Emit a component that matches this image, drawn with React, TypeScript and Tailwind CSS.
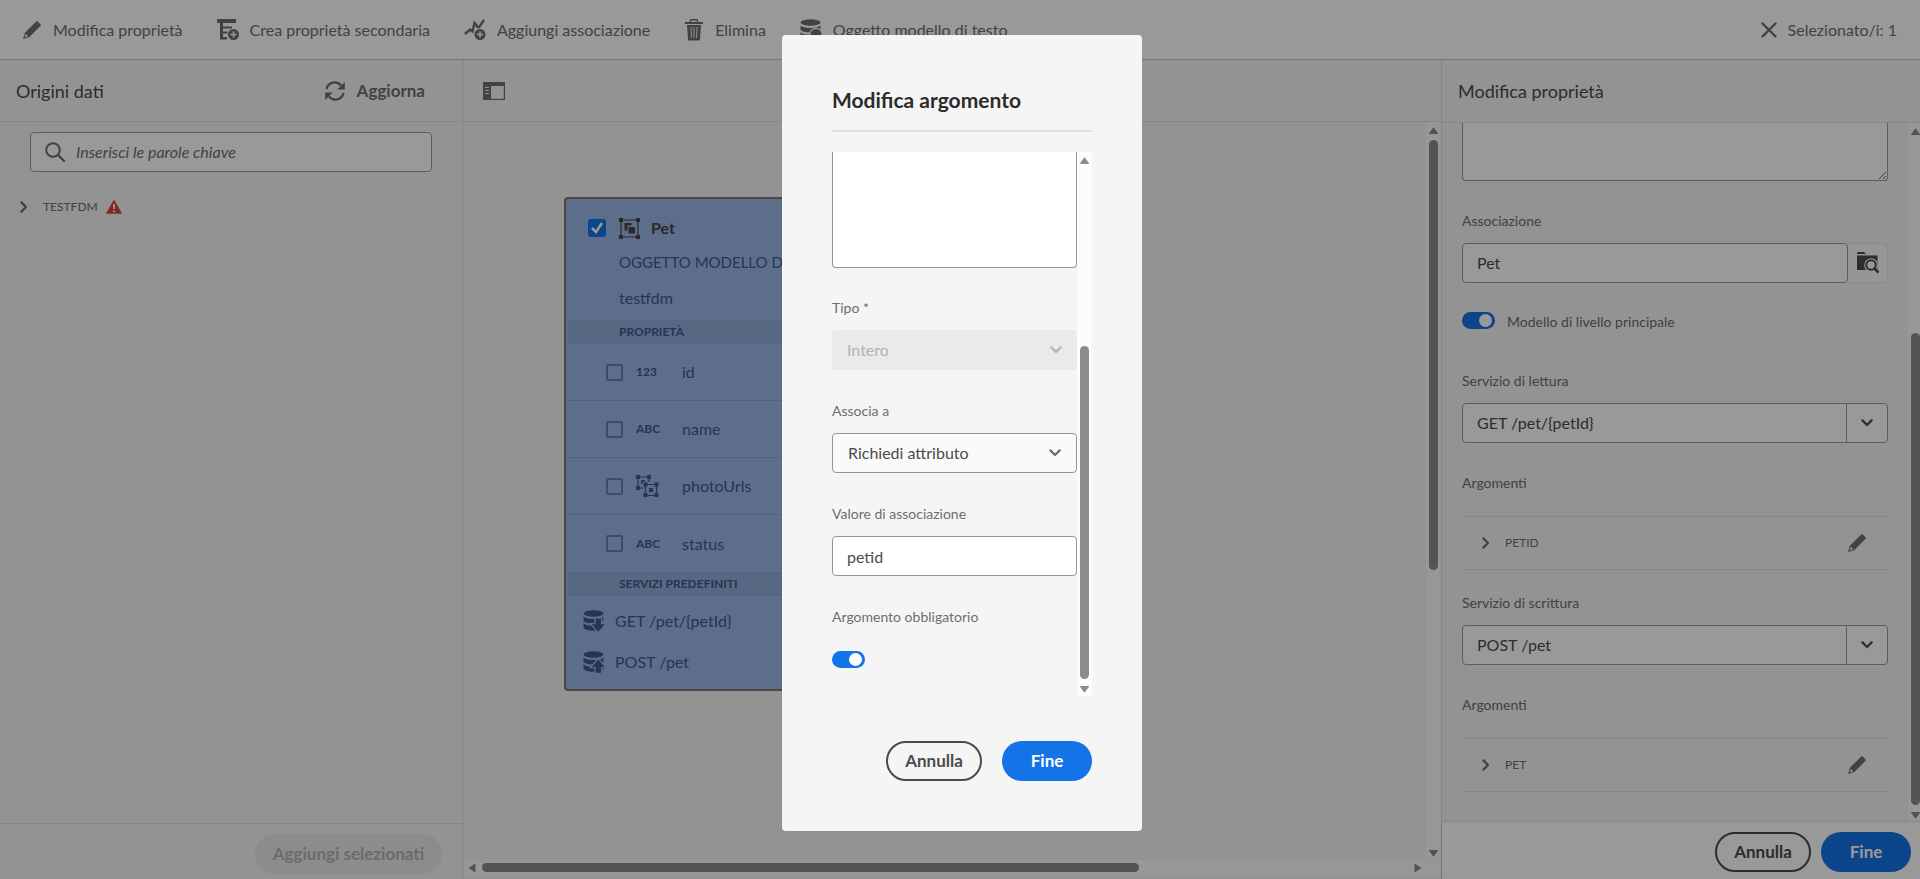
import type { ReactNode } from "react";

type IconProps = { className?: string };

function Pencil({ className = "size-5" }: IconProps) {
  return (
    <svg viewBox="0 0 36 36" fill="currentColor" className={className} aria-hidden="true">
      <path d="M33.567 8.2L27.8 2.432a1.215 1.215 0 0 0-.866-.353h-.06a1.372 1.372 0 0 0-.932.387L5.274 23.136a.992.992 0 0 0-.251.422L2.055 33.1c-.114.377.459.851.783.851a.251.251 0 0 0 .062-.007c.276-.063 7.866-2.344 9.542-2.847a.97.97 0 0 0 .414-.249l20.677-20.684A1.372 1.372 0 0 0 33.92 9.126 1.221 1.221 0 0 0 33.567 8.2zM11.4 29.316c-2.161.649-4.862 1.464-6.729 2.022l2.009-6.73z" />
    </svg>
  );
}

function AddChild() {
  return (
    <svg viewBox="0 0 22 22" fill="currentColor" className="size-[22px]" aria-hidden="true">
      <path d="M0 0h19v4H0z" />
      <path d="M3 4h3v16.500H3zM5 7.500h10v2H5zM5 12.500h5.500v2H5zM5 18h5v2.500H5z" />
      <circle cx="16.500" cy="15.500" r="5.500" />
      <path d="M15.700 12.500h1.600v2.200h2.200v1.600h-2.200v2.200h-1.600v-2.200h-2.200v-1.600h2.200z" fill="#fff" />
    </svg>
  );
}

function AddAssociation() {
  return (
    <svg viewBox="0 0 22 22" className="size-[22px]" aria-hidden="true">
      <path d="M1 15l5-4.500 2.500 2L10.500 4l4 5 5.500-8" fill="none" stroke="currentColor" strokeWidth="2.400" />
      <circle cx="16" cy="15.500" r="6.500" fill="#fff" />
      <circle cx="16" cy="15.500" r="5.500" fill="currentColor" />
      <path d="M15.200 12.500h1.600v2.200H19v1.600h-2.200v2.200h-1.600v-2.200H13v-1.600h2.200z" fill="#fff" />
    </svg>
  );
}

function Trash() {
  return (
    <svg viewBox="0 0 20 22" className="h-[22px] w-5" aria-hidden="true">
      <path d="M6.500 3V1.500q0-.7.7-.7h5.600q.7 0 .7.700V3" fill="none" stroke="currentColor" strokeWidth="1.400" />
      <path d="M1 3h18v2H1zM3 6h14l-1 14.500q-.1 1-1 1H5q-.9 0-1-1z" fill="currentColor" />
      <path d="M7 8l.5 11M10 8v11M13 8l-.5 11" stroke="#fff" strokeWidth="0.900" />
    </svg>
  );
}

function Database({ mode, gap }: { mode: "down" | "up" | "add"; gap: string }) {
  return (
    <svg viewBox="0 0 22 22" className="size-[22px]" aria-hidden="true">
      <ellipse cx="10.500" cy="3.500" rx="10" ry="3.300" fill="currentColor" />
      <path
        d="M.5 6.500q2 2.400 10 2.400t10-2.400v4.300q-2 2.600-10 2.600T.5 10.800zM.5 13.200q2 2.500 10 2.500t10-2.500v4.600q-2 3-10 3t-10-3z"
        fill="currentColor"
      />
      {mode === "down" && (
        <path d="M12.500 8.500h5.500v5.800h3.700L15.200 21.700 8.800 14.300h3.700z" fill="currentColor" stroke={gap} strokeWidth="2.600" paintOrder="stroke" />
      )}
      {mode === "up" && (
        <path d="M12.500 21.700h5.500v-5.800h3.700L15.200 8.500 8.800 15.900h3.700z" fill="currentColor" stroke={gap} strokeWidth="2.600" paintOrder="stroke" />
      )}
      {mode === "add" && <circle cx="16" cy="15.500" r="5.500" fill="currentColor" stroke={gap} strokeWidth="2.600" paintOrder="stroke" />}
    </svg>
  );
}

function Cross() {
  return (
    <svg viewBox="0 0 16 16" className="size-4" aria-hidden="true">
      <path d="M1.500 1.500l13 13M14.500 1.500l-13 13" stroke="currentColor" strokeWidth="2.400" strokeLinecap="round" />
    </svg>
  );
}

function Refresh() {
  return (
    <svg viewBox="0 0 20 20" className="size-5" aria-hidden="true">
      <path d="M1.500 8A8.300 8.300 0 0 1 16 4.500M18.500 12A8.300 8.300 0 0 1 4 15.500" fill="none" stroke="currentColor" strokeWidth="2.300" />
      <path d="M19.800 1v7.500h-7.500zM.2 19v-7.500h7.500z" fill="currentColor" />
    </svg>
  );
}

function PanelIcon() {
  return (
    <svg viewBox="0 0 22 18" className="h-[18px] w-[22px]" aria-hidden="true">
      <path d="M0 0h22v18H0z" fill="currentColor" />
      <path d="M8 4h12.800v12.800H8z" fill="#f5f5f5" />
      <path d="M2 5.500h4M2 8.500h4M2 11.500h4" stroke="#f5f5f5" strokeWidth="1.200" />
    </svg>
  );
}

function SearchIcon() {
  return (
    <svg viewBox="0 0 20 20" className="size-5 shrink-0" aria-hidden="true">
      <circle cx="8" cy="8" r="6.800" fill="none" stroke="currentColor" strokeWidth="2" />
      <path d="M13 13l6 6" stroke="currentColor" strokeWidth="2.400" strokeLinecap="round" />
    </svg>
  );
}

function ChevronRight() {
  return (
    <svg viewBox="0 0 8 12" className="h-3 w-2 shrink-0" aria-hidden="true">
      <path d="M1.400 1.400L6 6l-4.600 4.600" fill="none" stroke="currentColor" strokeWidth="2.200" strokeLinecap="round" strokeLinejoin="round" />
    </svg>
  );
}

function ChevronDown() {
  return (
    <svg viewBox="0 0 12 8" className="h-2 w-3 shrink-0" aria-hidden="true">
      <path d="M1.400 1.400L6 6l4.600-4.600" fill="none" stroke="currentColor" strokeWidth="2.200" strokeLinecap="round" strokeLinejoin="round" />
    </svg>
  );
}

function Warning() {
  return (
    <svg viewBox="0 0 16 14" className="h-[14px] w-4" aria-label="Avviso" role="img">
      <path d="M7.400.5q.6-.9 1.200 0l7 12.300q.4 1-.6 1H1q-1 0-.6-1z" fill="#e0403a" />
      <path d="M8 4v5M8 10.500v1.800" stroke="#fff" strokeWidth="1.800" />
    </svg>
  );
}

function FolderSearch() {
  return (
    <svg viewBox="0 0 22 22" className="size-[22px]" aria-hidden="true">
      <path d="M0 1q0-1 1-1h6l2 2H0zM0 3.500h20.500V18H0z" fill="currentColor" />
      <circle cx="14" cy="13" r="6.800" fill="#fafafa" />
      <path d="M17 16l5 5" stroke="#fafafa" strokeWidth="4" />
      <circle cx="14" cy="13" r="4.700" fill="none" stroke="currentColor" strokeWidth="2" />
      <path d="M17.500 16.500l4 4" stroke="currentColor" strokeWidth="2.600" />
    </svg>
  );
}

function ObjectIcon() {
  return (
    <svg viewBox="0 0 21 21" className="size-[21px]" fill="currentColor" aria-hidden="true">
      <path d="M2 2h17v17H2z" fill="none" stroke="currentColor" strokeWidth="1.200" />
      <path d="M0 0h4v4H0zM17 0h4v4h-4zM0 17h4v4H0zM17 17h4v4h-4zM5.500 5h7v2.500h-4v5h-3zM9.500 9h6.500v6.500H9.500z" />
    </svg>
  );
}

function ObjectsIcon() {
  return (
    <svg viewBox="0 0 23 22" className="h-[22px] w-[23px]" fill="currentColor" aria-hidden="true">
      <path d="M8 13H2V2h11v5M9.500 9.500h11v11h-11z" fill="none" stroke="currentColor" strokeWidth="1.200" />
      <path d="M0 0h4v4H0zM11 0h4v4h-4zM0 11h4v4H0zM7.500 7.500h4v4h-4zM18.500 7.500h4v4h-4zM7.500 18h4v4h-4zM18.500 18h4v4h-4zM13 13h4v4h-4zM5 5h4v1.500H6.500V9H5z" />
    </svg>
  );
}

function Arrow({ dir }: { dir: "up" | "down" | "left" | "right" }) {
  const d = {
    up: "M4.500.8L8.600 6.500H.4z",
    down: "M4.500 7.200L8.600 1.500H.4z",
    left: "M1.200 4L7 .2v7.600z",
    right: "M7.800 4L2 .2v7.600z",
  }[dir];
  return (
    <svg viewBox="0 0 9 8" className="h-2 w-[9px] shrink-0 text-[#8b8b8b]" aria-hidden="true">
      <path d={d} fill="currentColor" stroke="currentColor" strokeLinejoin="round" />
    </svg>
  );
}

function VerticalBar({ before, thumb, after, clip = false }: { before: string; thumb: string; after: string; clip?: boolean }) {
  return (
    <div
      aria-hidden="true"
      className={`flex shrink-0 flex-col items-center bg-[#fcfcfc] pt-[5px] pb-[3px] ${clip ? "w-3 pl-[3px]" : "w-[15px]"}`}
    >
      <Arrow dir="up" />
      <div className={before} />
      <div className={`w-[9px] rounded-full bg-[#8b8b8b] ${thumb}`} />
      <div className={after} />
      <Arrow dir="down" />
    </div>
  );
}

function Toggle({ id, label }: { id: string; label?: string }) {
  return (
    <input
      id={id}
      type="checkbox"
      role="switch"
      defaultChecked
      aria-label={label}
      className="h-[17px] w-[33px] shrink-0 appearance-none rounded-full bg-[#1473e6] before:mt-[2px] before:ml-[17px] before:block before:size-[13px] before:rounded-full before:bg-white"
    />
  );
}

function ToolButton({ icon, children }: { icon: ReactNode; children: ReactNode }) {
  return (
    <button type="button" className="flex items-center gap-[11px] whitespace-nowrap">
      {icon}
      <span>{children}</span>
    </button>
  );
}

function CancelButton() {
  return (
    <button type="button" className="h-10 w-24 rounded-full border-2 border-[#4b4b4b] text-[17px] leading-6 font-bold text-[#4b4b4b]">
      Annulla
    </button>
  );
}

function DoneButton() {
  return (
    <button type="button" className="h-10 w-[90px] rounded-full bg-[#1473e6] text-[17px] leading-6 font-bold text-white">
      Fine
    </button>
  );
}

function Field({ id, label, children }: { id: string; label: string; children: ReactNode }) {
  return (
    <div className="flex flex-col">
      <label htmlFor={id} className="mb-3 text-sm leading-5 text-[#6e6e6e]">
        {label}
      </label>
      {children}
    </div>
  );
}

function ServiceField({ id, label, value }: { id: string; label: string; value: string }) {
  return (
    <Field id={id} label={label}>
      <div className="flex h-10 rounded border border-[#9b9b9b] bg-white text-[#4b4b4b]">
        <input id={id} defaultValue={value} className="min-w-0 flex-1 px-[14px] text-base" />
        <button type="button" aria-label={label} className="flex w-[41px] items-center justify-center border-l border-[#9b9b9b]">
          <ChevronDown />
        </button>
      </div>
    </Field>
  );
}

function Arguments({ name }: { name: string }) {
  return (
    <section>
      <h3 className="text-sm leading-5 text-[#6e6e6e]">Argomenti</h3>
      <div className="mt-[23px] flex h-[54px] items-center border-y border-[#e1e1e1] pr-[21px] pl-5 text-[#6e6e6e]">
        <button type="button" className="flex flex-1 items-center gap-[15px] text-xs">
          <ChevronRight />
          {name}
        </button>
        <button type="button" aria-label="Modifica" className="text-[#6e6e6e]">
          <Pencil />
        </button>
      </div>
    </section>
  );
}

const properties = [
  { name: "id", kind: "123" },
  { name: "name", kind: "ABC" },
  { name: "photoUrls", kind: "" },
  { name: "status", kind: "ABC" },
];

function ModelCard() {
  return (
    <article className="mt-[75px] ml-[100px] w-[440px] shrink-0 rounded border-2 border-[#7d7b79] bg-[#9bb7e8] text-base text-[#40598a]">
      <header className="flex h-[121px] flex-col px-[22px] pt-[17px]">
        <div className="flex items-center text-[#4a4541]">
          <input
            id="pet"
            type="checkbox"
            defaultChecked
            className="size-[18px] appearance-none rounded-[3px] bg-[#1473e6] bg-[url('data:image/svg+xml,%3Csvg%20xmlns=%22http://www.w3.org/2000/svg%22%20viewBox=%220%200%2018%2018%22%3E%3Cpath%20d=%22M4%209l4%204%206-9%22%20fill=%22none%22%20stroke=%22white%22%20stroke-width=%222.500%22/%3E%3C/svg%3E')]"
          />
          <span className="ml-[13px]">
            <ObjectIcon />
          </span>
          <label htmlFor="pet" className="ml-[11px] font-bold">
            Pet
          </label>
        </div>
        <p className="mt-[10px] ml-[31px] text-[15px] leading-6">OGGETTO MODELLO DATI</p>
        <p className="mt-3 ml-[31px] leading-6">testfdm</p>
      </header>
      <h3 className="mx-[2px] flex h-6 items-center border-y border-[#8ba5d2] bg-[#93addb] pl-[51px] text-xs font-bold">PROPRIETÀ</h3>
      <ul className="mx-[2px]">
        {properties.map((p) => (
          <li key={p.name} className="flex h-[57px] items-center border-b border-[#8ba5d2] pl-[38px] last:border-b-0">
            <input
              id={`prop-${p.name}`}
              type="checkbox"
              className="size-[17px] appearance-none rounded-[2px] border-2 border-[#6780ab]"
            />
            <span className="ml-[13px] flex w-[46px] items-center text-xs font-bold">{p.kind || <ObjectsIcon />}</span>
            <label htmlFor={`prop-${p.name}`}>{p.name}</label>
          </li>
        ))}
      </ul>
      <h3 className="mx-[2px] flex h-6 items-center border-y border-[#8ba5d2] bg-[#93addb] pl-[51px] text-xs font-bold">SERVIZI PREDEFINITI</h3>
      <ul className="flex h-[93px] flex-col pt-1">
        <li className="flex h-[41px] items-center gap-[10px] pl-[17px]">
          <Database mode="down" gap="#9bb7e8" />
          GET /pet/&#123;petId&#125;
        </li>
        <li className="flex h-[41px] items-center gap-[10px] pl-[17px]">
          <Database mode="up" gap="#9bb7e8" />
          POST /pet
        </li>
      </ul>
    </article>
  );
}

function ArgumentDialog() {
  return (
    <div className="absolute inset-0 flex items-start justify-center bg-black/40 pt-[35px]">
      <div role="dialog" aria-modal="true" aria-labelledby="dialog-title" className="ml-1 flex w-[360px] flex-col rounded bg-[#f5f5f5] px-[50px] pt-[50px] pb-[50px]">
        <h2 id="dialog-title" className="border-b-2 border-[#e1e1e1] pb-[15px] text-[21px] leading-[30px] font-bold text-[#2c2c2c]">
          Modifica argomento
        </h2>
        <div className="mt-5 flex">
          <div className="flex min-w-0 flex-1 flex-col pb-7">
            <textarea
              aria-label="Descrizione"
              className="h-[116px] resize-none rounded-b border border-t-0 border-[#959595] bg-white p-3"
            />
            <div className="mt-[30px] flex flex-col gap-[31px]">
              <Field id="type" label="Tipo *">
                <div className="flex h-10 items-center rounded bg-[#eaeaea] text-[#b3b3b3]">
                  <select id="type" disabled className="h-full flex-1 appearance-none px-[15px] text-base opacity-100">
                    <option>Intero</option>
                  </select>
                  <span className="pr-[15px]">
                    <ChevronDown />
                  </span>
                </div>
              </Field>
              <Field id="bind" label="Associa a">
                <div className="flex h-10 items-center rounded border border-[#959595] bg-[#fafafa] text-[#4b4b4b]">
                  <select id="bind" className="h-full flex-1 appearance-none px-[15px] text-base">
                    <option>Richiedi attributo</option>
                  </select>
                  <span className="pr-[15px] text-[#6e6e6e]">
                    <ChevronDown />
                  </span>
                </div>
              </Field>
              <Field id="bind-value" label="Valore di associazione">
                <input
                  id="bind-value"
                  defaultValue="petid"
                  className="h-10 rounded border border-[#959595] bg-white px-[14px] text-base text-[#4b4b4b]"
                />
              </Field>
              <div className="flex flex-col items-start gap-6">
                <label htmlFor="required" className="text-sm leading-5 text-[#6e6e6e]">
                  Argomento obbligatorio
                </label>
                <Toggle id="required" />
              </div>
            </div>
          </div>
          <VerticalBar before="flex-1" thumb="h-[333px]" after="h-[6px]" />
        </div>
        <div className="mt-[45px] flex justify-end gap-5">
          <CancelButton />
          <DoneButton />
        </div>
      </div>
    </div>
  );
}

export default function App() {
  return (
    <div className="relative flex h-screen flex-col overflow-hidden bg-[#f5f5f5] font-['Lato',sans-serif] text-base text-[#4b4b4b]">
      <header className="flex h-[60px] shrink-0 items-center border-b border-[#c8c8c8] bg-white pt-px pr-[23px] pl-[22px] text-[#6e6e6e]">
        <nav className="flex flex-1 items-center gap-[34px]">
          <ToolButton icon={<Pencil />}>Modifica proprietà</ToolButton>
          <ToolButton icon={<AddChild />}>Crea proprietà secondaria</ToolButton>
          <ToolButton icon={<AddAssociation />}>Aggiungi associazione</ToolButton>
          <ToolButton icon={<Trash />}>Elimina</ToolButton>
          <ToolButton icon={<Database mode="add" gap="#ffffff" />}>Oggetto modello di testo</ToolButton>
        </nav>
        <ToolButton icon={<Cross />}>Selezionato/i: 1</ToolButton>
      </header>

      <div className="flex min-h-0 flex-1">
        <aside className="flex w-[464px] shrink-0 flex-col border-r-2 border-[#eaeaea]">
          <div className="flex h-[62px] shrink-0 items-center justify-between border-b border-[#e1e1e1] pr-[37px] pl-4">
            <h2 className="text-lg text-[#4b4b4b]">Origini dati</h2>
            <button type="button" className="flex items-center gap-3 text-[17px] leading-6 font-bold text-[#6e6e6e]">
              <Refresh />
              Aggiorna
            </button>
          </div>
          <div className="flex flex-1 flex-col pt-[10px]">
            <label className="mr-[30px] ml-[30px] flex h-10 items-center gap-[11px] rounded border border-[#9b9b9b] bg-white px-[14px] text-[#6e6e6e]">
              <SearchIcon />
              <input
                type="search"
                aria-label="Cerca"
                placeholder="Inserisci le parole chiave"
                className="min-w-0 flex-1 text-base italic placeholder:text-[#6e6e6e]"
              />
            </label>
            <button type="button" className="mt-[27px] ml-5 flex items-center gap-[15px] text-xs text-[#6e6e6e]">
              <ChevronRight />
              <span className="flex items-center gap-2">
                TESTFDM
                <Warning />
              </span>
            </button>
          </div>
          <div className="flex h-14 shrink-0 justify-end border-t border-[#dcdcdc] pt-[10px] pr-5">
            <button type="button" disabled className="h-10 w-[187px] rounded-full bg-[#eaeaea] text-[17px] leading-6 font-bold text-[#b3b3b3]">
              Aggiungi selezionati
            </button>
          </div>
        </aside>

        <main className="flex min-w-0 flex-1 flex-col">
          <div className="flex h-[62px] shrink-0 items-center border-b border-[#e1e1e1] pl-[19px] text-[#6e6e6e]">
            <button type="button" aria-label="Pannello">
              <PanelIcon />
            </button>
          </div>
          <div className="flex min-h-0 flex-1">
            <div className="flex min-w-0 flex-1 items-start overflow-hidden">
              <ModelCard />
            </div>
            <VerticalBar before="h-[5px]" thumb="h-[430px]" after="flex-1" />
          </div>
          <div className="mb-1 flex h-[15px] shrink-0 bg-[#fcfcfc] pr-[15px]">
            <div aria-hidden="true" className="flex flex-1 items-center px-1">
              <Arrow dir="left" />
              <div className="mx-[5px] flex flex-1">
                <div className="h-[9px] w-[71%] rounded-full bg-[#8b8b8b]" />
              </div>
              <Arrow dir="right" />
            </div>
          </div>
        </main>

        <aside className="flex w-[479px] shrink-0 flex-col border-l border-[#dcdcdc]">
          <h2 className="flex h-[63px] shrink-0 items-center border-b border-[#e1e1e1] pl-4 text-lg text-[#4b4b4b]">Modifica proprietà</h2>
          <div className="flex min-h-0 flex-1">
            <div className="flex min-w-0 flex-1 flex-col overflow-hidden pr-5 pl-5">
              <textarea
                aria-label="Descrizione"
                className="h-[58px] shrink-0 rounded-b border border-t-0 border-[#9b9b9b] bg-white p-3"
              />
              <div className="mt-[30px]">
                <Field id="binding" label="Associazione">
                  <div className="flex h-10">
                    <input
                      id="binding"
                      defaultValue="Pet"
                      className="min-w-0 flex-1 rounded border border-[#9b9b9b] bg-white px-[14px] text-base text-[#4b4b4b]"
                    />
                    <button
                      type="button"
                      aria-label="Sfoglia"
                      className="flex w-10 items-center justify-center rounded-r border border-l-0 border-[#e6e6e6] bg-[#fafafa] text-[#4b4b4b]"
                    >
                      <FolderSearch />
                    </button>
                  </div>
                </Field>
              </div>
              <div className="mt-[29px] flex h-5 items-start gap-3">
                <Toggle id="top-level" />
                <label htmlFor="top-level" className="text-sm leading-5 text-[#6e6e6e]">
                  Modello di livello principale
                </label>
              </div>
              <div className="mt-[39px]">
                <ServiceField id="read" label="Servizio di lettura" value="GET /pet/{petId}" />
              </div>
              <div className="mt-[30px]">
                <Arguments name="PETID" />
              </div>
              <div className="mt-[23px]">
                <ServiceField id="write" label="Servizio di scrittura" value="POST /pet" />
              </div>
              <div className="mt-[30px]">
                <Arguments name="PET" />
              </div>
            </div>
            <VerticalBar before="flex-1" thumb="h-[472px]" after="h-[6px]" clip />
          </div>
          <div className="flex h-[57px] shrink-0 justify-end gap-[10px] bg-white pt-[10px] pr-[9px] shadow-[0_0_3px_rgba(0,0,0,0.2)]">
            <CancelButton />
            <DoneButton />
          </div>
        </aside>
      </div>

      <ArgumentDialog />
    </div>
  );
}
